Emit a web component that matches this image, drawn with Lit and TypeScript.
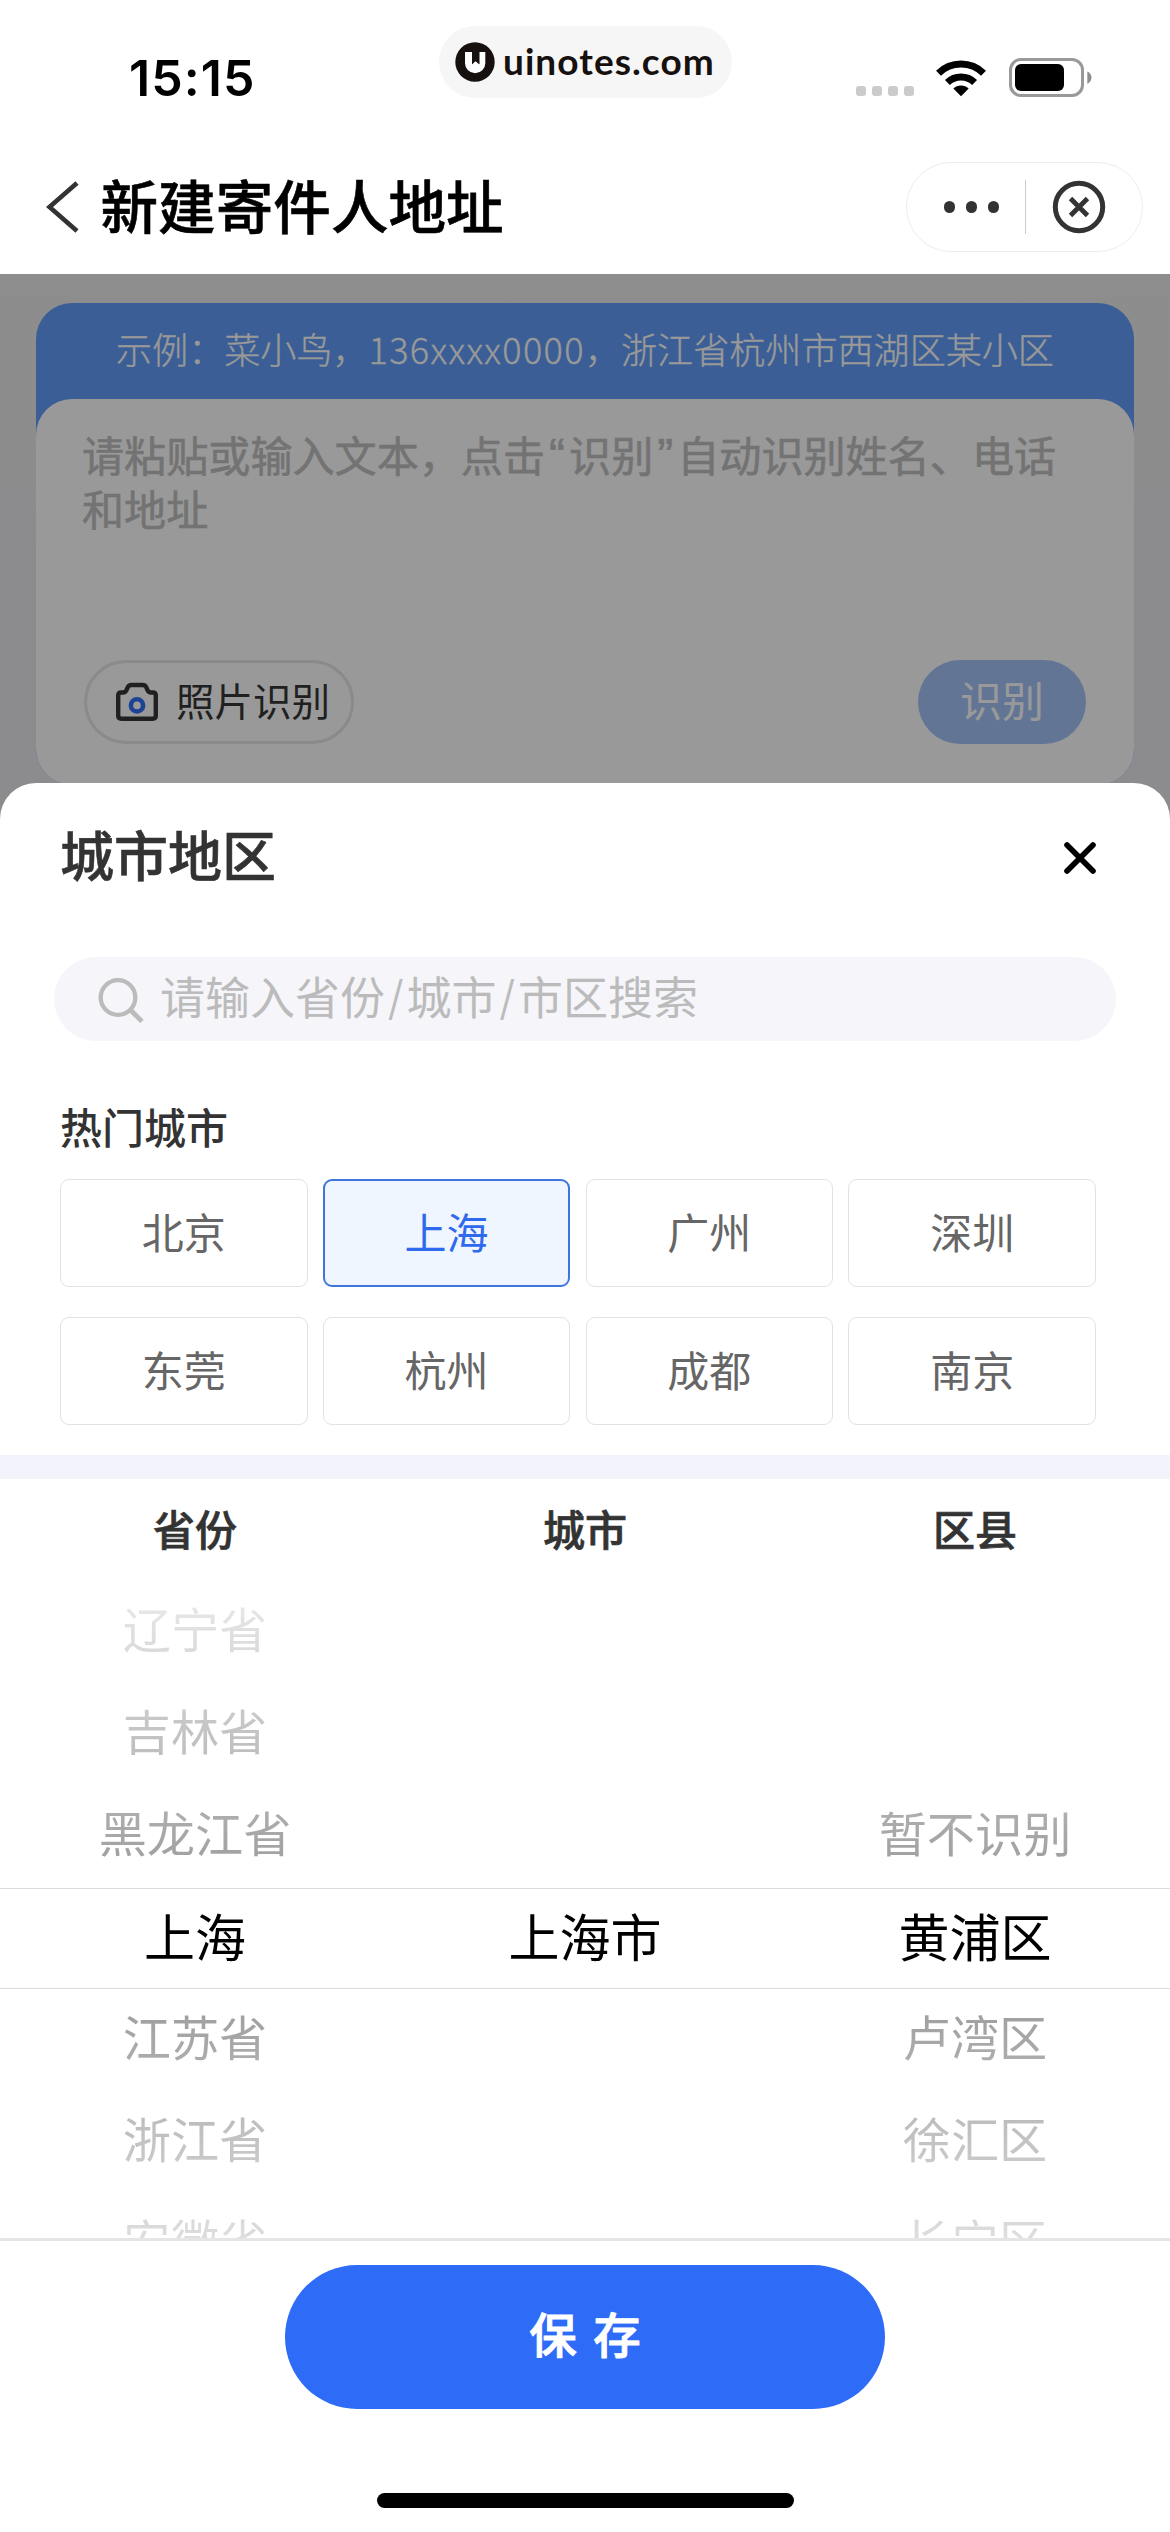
import { LitElement, html, css } from "lit";
import { customElement, state } from "lit/decorators.js";
import { classMap } from "lit/directives/class-map.js";

const FONT = css`"Noto Sans CJK SC", "Liberation Sans", sans-serif`;

@customElement("status-bar")
class StatusBar extends LitElement {
  static styles = css`
    :host { display: flex; height: 134px; position: relative; }
    .time {
      flex: 1; padding: 0 0 0 129px; font: 600 50px/60px "Inter", sans-serif;
      margin-top: 48px; color: #000; letter-spacing: 1.1px;
    }
    .brand {
      position: absolute; left: 439px; top: 26px; width: 293px; height: 72px; box-sizing: border-box;
      border-radius: 36px; background: #f6f6f6; display: flex; align-items: center; padding-left: 16px;
    }
    .brand svg { width: 40px; height: 40px; }
    .brand span { font: 700 37px/44px "Lato", sans-serif; color: #16110f; margin-left: 8px; margin-top: -2px; white-space: nowrap; letter-spacing: 1.05px; }
    .icons { display: flex; padding-right: 77px; margin-top: 58px; height: 40px; }
    .dots { display: flex; gap: 6px; align-items: flex-end; padding-bottom: 2px; }
    .dots i { width: 10px; height: 10px; border-radius: 3px; background: #cbcbcb; }
    .wifi { width: 52px; height: 40px; margin-left: 21px; }
    .battery { width: 84px; height: 40px; margin-left: 22px; }
  `;
  render() {
    return html`
      <div class="time">15:15</div>
      <div class="brand">
        <svg viewBox="0 0 40 40">
          <circle cx="20" cy="20" r="19.7" fill="#16110f" />
          <path d="M10 10H17v12.2l3.5-3.2 3.8 3.2V10h6v11.2a10.1 10.1 0 0 1-20.3 0z" fill="#fff" />
          <path d="M17 9.5h7.3v12.7L20.5 19 17 22.2z" fill="#16110f" />
        </svg>
        <span>uinotes.com</span>
      </div>
      <div class="icons">
        <div class="dots"><i></i><i></i><i></i><i></i></div>
        <svg class="wifi" viewBox="0 0 52 40">
          <path d="M26 38.2 18.3 30.6a11 11 0 0 1 15.4 0z" fill="#000" />
          <path d="M12.4 24.4a19.6 19.6 0 0 1 27.2 0" fill="none" stroke="#000" stroke-width="7" />
          <path d="M3.5 15.2a32.2 32.2 0 0 1 45 0" fill="none" stroke="#000" stroke-width="7" />
        </svg>
        <svg class="battery" viewBox="0 0 84 40">
          <rect x="1.5" y="1.5" width="72" height="36" rx="10.5" fill="none" stroke="#999" stroke-width="3" />
          <rect x="6" y="6" width="49" height="27" rx="6" fill="#000" />
          <path d="M78.3 13.4c2.6 1 4.2 3.4 4.2 6.2s-1.6 5.2-4.2 6.2z" fill="#8e8e8e" />
        </svg>
      </div>
    `;
  }
}

@customElement("nav-bar")
class NavBar extends LitElement {
  static styles = css`
    :host { display: flex; height: 140px; align-items: flex-start; }
    .back { width: 36px; height: 54px; margin: 46px 0 0 44px; }
    h1 { flex: 1; margin: 26px 0 0 20.5px; font: 500 57.6px/88px ${FONT}; color: #000; -webkit-text-stroke: 0.6px #000; }
    .capsule {
      box-sizing: border-box; width: 237px; height: 90px; margin: 28px 27px 0 0; display: flex; align-items: center;
      border: 1.5px solid #ededed; border-radius: 45px; background: #fff;
    }
    .more { width: 118px; display: flex; justify-content: center; gap: 10.5px; padding-left: 11px; box-sizing: border-box; }
    .more i { width: 11.5px; height: 11.5px; border-radius: 50%; background: #333; }
    .rule { width: 1px; height: 54px; background: #ccc; }
    .close { width: 54px; height: 54px; margin-left: 26px; }
  `;
  render() {
    return html`
      <svg class="back" viewBox="0 0 36 54">
        <path d="M33 3 5.5 27 33 51" fill="none" stroke="#333" stroke-width="4.6" />
      </svg>
      <h1>新建寄件人地址</h1>
      <div class="capsule">
        <div class="more"><i></i><i></i><i></i></div>
        <div class="rule"></div>
        <svg class="close" viewBox="0 0 54 54" fill="none" stroke="#333">
          <circle cx="27" cy="27" r="23.7" stroke-width="5" />
          <path d="m18.5 18.5 17 17m0-17-17 17" stroke-width="4.8" />
        </svg>
      </div>
    `;
  }
}

@customElement("address-form")
class AddressForm extends LitElement {
  static styles = css`
    :host {
      display: block; position: relative; height: 545px; box-sizing: border-box; padding: 29px 36px 0;
      background: linear-gradient(#ebebec, #e9e9ee); font-family: ${FONT};
    }
    .card { height: 482px; border-radius: 36px; background: #619df8; display: flex; flex-direction: column; }
    .example {
      height: 96px; line-height: 90px; padding-left: 80px; font-size: 36.1px; font-weight: 300; color: #fff; white-space: nowrap;
      -webkit-text-stroke: 0.3px #fff;
    }
    .number { letter-spacing: 1.35px; }
    .body {
      flex: 1; background: #fff; border-radius: 36px; padding: 28px 48px 41px 46px; box-sizing: border-box;
      display: flex; flex-direction: column; justify-content: space-between;
    }
    .hint { font-size: 42.1px; line-height: 53.5px; color: #c0c0c0; white-space: nowrap; -webkit-text-stroke: 0.6px #c0c0c0; }
    .quote { display: inline-block; width: 24px; text-align: center; font: 48px/20px "Liberation Sans", sans-serif; }
    .actions { display: flex; justify-content: space-between; margin-left: 2px; }
    .photo {
      box-sizing: border-box; width: 270px; height: 84px; border: 3px solid #e6e6e6; border-radius: 42px;
      display: flex; align-items: center; padding-left: 28px; font-size: 38.5px; line-height: 74px; color: #363636;
    }
    .photo svg { width: 44px; height: 40px; }
    .photo span { margin: -6px 0 0 17px; }
    .submit {
      width: 168px; height: 84px; border-radius: 42px; background: #a3c3f8; color: #fff;
      font-size: 42px; line-height: 78px; text-align: center;
    }
    .dim { position: absolute; inset: 0; background: rgba(0, 0, 0, 0.4); }
  `;
  render() {
    return html`
      <div class="card">
        <div class="example">示例：菜小鸟，<span class="number">136xxxx0000</span>，浙江省杭州市西湖区某小区</div>
        <div class="body">
          <div class="hint">请粘贴或输入文本，点击<span class="quote">“</span>识别<span class="quote">”</span>自动识别姓名、电话<br />和地址</div>
          <div class="actions">
            <div class="photo">
              <svg viewBox="0 0 44 40" fill="none">
                <path
                  d="M3.2 13.5q0-3 3-3h1.8q2.5 0 3.5-2.3l1.3-3q1-2.2 3.5-2.2h11.4q2.5 0 3.5 2.2l1.3 3q1 2.3 3.5 2.3h1.8q3 0 3 3V33.500q0 3.200-3 3.200H6.200q-3 0-3-3.200z"
                  stroke="#363636" stroke-width="4.4" />
                <circle cx="22" cy="23.4" r="6.1" stroke="#306ef7" stroke-width="4.6" />
              </svg>
              <span>照片识别</span>
            </div>
            <div class="submit">识别</div>
          </div>
        </div>
      </div>
      <div class="dim"></div>
    `;
  }
}

interface Column {
  title: string;
  items: string[];
  selected: number;
}

@customElement("region-picker")
class RegionPicker extends LitElement {
  static properties = { columns: { attribute: false } };
  declare columns: Column[];
  static styles = css`
    :host { display: block; font-family: ${FONT}; }
    .heads, .wheels { display: grid; grid-template-columns: repeat(3, 1fr); text-align: center; }
    .heads { height: 102px; font-size: 42px; font-weight: 500; line-height: 98px; color: #333; -webkit-text-stroke: 0.7px #333; }
    .wheels { position: relative; height: 657px; overflow: hidden; }
    .item { height: 102px; line-height: 92px; font-size: 48.2px; color: #000; }
    .item.on { font-size: 51px; line-height: 96px; }
    .shade { position: absolute; left: 0; right: 0; }
    .upper { top: -15px; height: 322px; background: linear-gradient(rgba(255, 255, 255, 0.95), rgba(255, 255, 255, 0.6)); border-bottom: 1.5px solid #dcdcdc; }
    .lower { top: 407px; height: 322px; background: linear-gradient(rgba(255, 255, 255, 0.6), rgba(255, 255, 255, 0.95)); border-top: 1.5px solid #dcdcdc; }
  `;
  render() {
    return html`
      <div class="heads">${this.columns.map((c) => html`<div>${c.title}</div>`)}</div>
      <div class="wheels">
        ${this.columns.map((c) => {
          const blanks = Array.from({ length: 3 - c.selected }, () => "");
          return html`<div>
            ${[...blanks, ...c.items].map(
              (name, i) => html`<div class=${classMap({ item: true, on: i === 3 })}>${name}</div>`,
            )}
          </div>`;
        })}
        <div class="shade upper"></div>
        <div class="shade lower"></div>
      </div>
    `;
  }
}

@customElement("city-sheet")
class CitySheet extends LitElement {
  @state() private city = "上海";
  private cities = ["北京", "上海", "广州", "深圳", "东莞", "杭州", "成都", "南京"];
  private columns: Column[] = [
    { title: "省份", selected: 3, items: ["辽宁省", "吉林省", "黑龙江省", "上海", "江苏省", "浙江省", "安徽省"] },
    { title: "城市", selected: 0, items: ["上海市"] },
    { title: "区县", selected: 1, items: ["暂不识别", "黄浦区", "卢湾区", "徐汇区", "长宁区"] },
  ];
  static styles = css`
    :host {
      display: block; position: relative; margin-top: -36px; height: 1749px; background: #fff;
      border-radius: 36px 36px 0 0; font-family: ${FONT}; color: #333;
    }
    .top { height: 174px; box-sizing: border-box; display: flex; justify-content: space-between; padding: 31px 72px 0 60px; }
    h2 { margin: 0; font-size: 54px; line-height: 80px; font-weight: 500; -webkit-text-stroke: 0.6px #333; }
    .top svg { width: 36px; height: 36px; margin-top: 26px; }
    .search {
      height: 84px; margin: 0 54px; border-radius: 42px; background: #f5f5fa; display: flex; align-items: center;
      color: #bbb; font-size: 45px; padding-left: 43px;
    }
    .search svg { width: 48px; height: 48px; }
    .search .text { margin: -6px 0 0 15px; line-height: 80px; }
    .slash { display: inline-block; width: 21.5px; text-align: center; font: 300 47px/40px "Inter", sans-serif; }
    h3 { margin: 54px 0 0 60px; font-size: 42px; line-height: 62px; font-weight: 500; }
    .grid {
      display: grid; grid-template-columns: repeat(4, 247.5px); column-gap: 15.3px; row-gap: 30px; padding: 22px 60px 0;
    }
    .cell {
      box-sizing: border-box; height: 108px; border: 1.5px solid #e2e2e2; border-radius: 9px; text-align: center;
      font-size: 42px; line-height: 101px; color: #666;
    }
    .cell.active { border: 2px solid #3e76de; background: #eff6ff; color: #2f6aee; line-height: 100px; }
    .band { height: 24px; margin-top: 30px; background: #f3f4fb; }
    .foot { height: 294px; border-top: 3px solid #e5e5e5; box-sizing: border-box; display: flex; flex-direction: column; align-items: center; }
    .save {
      width: 600px; height: 144px; margin-top: 24px; border-radius: 72px; background: #2e6bf6; color: #fff;
      font-size: 47.5px; line-height: 136px; font-weight: 500; text-align: center; -webkit-text-stroke: 0.9px #fff;
    }
    .save span { letter-spacing: 16.5px; }
    .home { width: 417px; height: 15px; border-radius: 8px; background: #000; margin-top: 84px; }
  `;
  render() {
    return html`
      <div class="top">
        <h2>城市地区</h2>
        <svg viewBox="0 0 36 36">
          <path d="M5 5l26 26M31 5 5 31" fill="none" stroke="#000" stroke-width="5.6" stroke-linecap="round" />
        </svg>
      </div>
      <div class="search">
        <svg viewBox="0 0 48 48" fill="none" stroke="#bbb" stroke-width="4.3">
          <circle cx="21" cy="22.5" r="17.3" />
          <path d="M33.5 35 45 46.5" stroke-width="4.8" />
        </svg>
        <span class="text">请输入省份<span class="slash">/</span>城市<span class="slash">/</span>市区搜索</span>
      </div>
      <h3>热门城市</h3>
      <div class="grid">
        ${this.cities.map(
          (name) => html`<div
            class=${classMap({ cell: true, active: name === this.city })}
            @click=${() => (this.city = name)}
          >${name}</div>`,
        )}
      </div>
      <div class="band"></div>
      <region-picker .columns=${this.columns}></region-picker>
      <div class="foot">
        <div class="save"><span>保</span>存</div>
        <div class="home"></div>
      </div>
    `;
  }
}

@customElement("app-root")
class AppRoot extends LitElement {
  static styles = css`
    :host { display: block; width: 1170px; height: 2532px; overflow: hidden; background: #fff; }
  `;
  render() {
    return html`
      <status-bar></status-bar>
      <nav-bar></nav-bar>
      <address-form></address-form>
      <city-sheet></city-sheet>
    `;
  }
}
